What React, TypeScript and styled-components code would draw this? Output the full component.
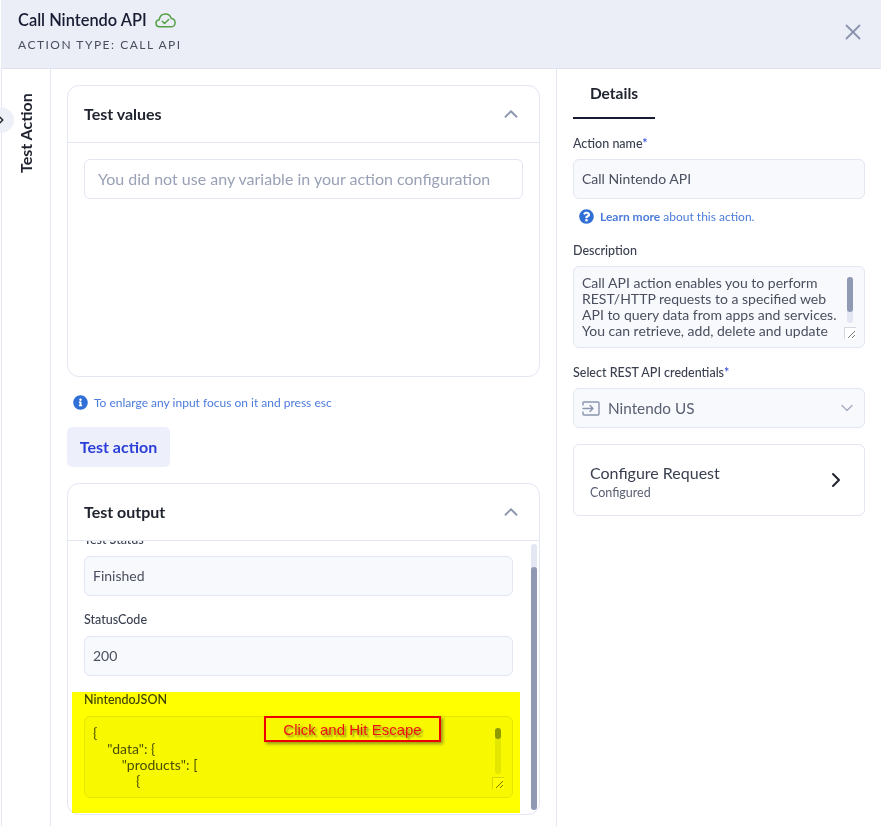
import React from "react";
import styled, { createGlobalStyle } from "styled-components";
import { ChevronDown, ChevronRight, ChevronUp, X } from "lucide-react";
import { FaInfoCircle, FaQuestionCircle } from "react-icons/fa";

const Global = createGlobalStyle`
  html, body { margin: 0; padding: 0; background: #fff; }
  * { box-sizing: border-box; }
  body { font-family: "Lato", "Noto Sans", sans-serif; color: #20242f; }
`;

const Page = styled.div`
  position: relative;
  width: 881px;
  height: 826px;
  overflow: hidden;
  display: flex;
  flex-direction: column;
  padding-left: 1px;
  background: #fff;
`;

const Header = styled.header`
  height: 69px;
  flex: none;
  background: #ebeef7;
  border-bottom: 1px solid #dfe3f0;
  padding: 10px 15px 0 17px;
  display: flex;
  justify-content: space-between;
  align-items: flex-start;
`;

const TitleBlock = styled.div`
  display: flex;
  flex-direction: column;
  gap: 7px;
`;

const TitleRow = styled.div`
  display: flex;
  align-items: center;
  gap: 8px;
  height: 20px;
`;

const Title = styled.h1`
  margin: 0;
  font-size: 16.4px;
  line-height: 20px;
  font-weight: 600;
  color: #171c33;
`;

const Subtitle = styled.div`
  font-size: 12px;
  line-height: 16px;
  letter-spacing: 1.5px;
  color: #4a4f5f;
`;

const CloseButton = styled.button`
  border: 0;
  background: none;
  padding: 0;
  margin-top: 9px;
  display: flex;
  color: #8b95ad;
`;

const Body = styled.div`
  flex: 1;
  display: flex;
  min-height: 0;
  border-left: 1px solid #e3e6f3;
`;

const Rail = styled.aside`
  width: 49px;
  flex: none;
  border-right: 1px solid #e3e6f3;
  display: flex;
  justify-content: center;
  padding-top: 24px;
  padding-right: 1px;
`;

const RailLabel = styled.div`
  writing-mode: vertical-rl;
  transform: rotate(180deg);
  height: 80px;
  font-size: 16px;
  font-weight: 700;
  line-height: 20px;
  text-align: left;
  color: #20242f;
`;

const RailToggle = styled.div`
  position: absolute;
  left: -13px;
  top: 107px;
  width: 27px;
  height: 26px;
  border-radius: 50%;
  background: #eef0f8;
  display: flex;
  align-items: center;
  justify-content: flex-end;
  padding-right: 6px;
  color: #20242f;
`;

const Main = styled.main`
  width: 506px;
  flex: none;
  border-right: 1px solid #e3e6f3;
  padding: 16px 16px 0 16px;
  display: flex;
  flex-direction: column;
`;

const Card = styled.section<{ $height: number }>`
  height: ${(p) => p.$height}px;
  flex: none;
  border: 1px solid #e3e6f3;
  border-radius: 12px;
  display: flex;
  flex-direction: column;
  overflow: hidden;
  background: #fff;
`;

const CardHeader = styled.div`
  height: 57px;
  flex: none;
  border-bottom: 1px solid #e3e6f3;
  padding: 0 17px 0 16px;
  display: flex;
  align-items: center;
  justify-content: space-between;
  color: #8b95ad;
`;

const CardTitle = styled.h2`
  margin: 0;
  font-size: 16px;
  font-weight: 700;
  line-height: 20px;
  color: #20242f;
`;

const CardBody = styled.div`
  padding: 16px;
`;

const Field = styled.div<{ $height?: number }>`
  height: ${(p) => p.$height ?? 40}px;
  border: 1px solid #e3e6f3;
  border-radius: 6px;
  background: #f8f9fd;
  padding: 0 8px 2px;
  display: flex;
  align-items: center;
  font-size: 14px;
  color: #4a4f5f;
`;

const WhiteField = styled(Field)`
  background: #fff;
`;

const Placeholder = styled.span`
  font-size: 16px;
  padding-left: 5px;
  color: #98a1b5;
`;

const InfoRow = styled.div`
  margin: 16px 0 0 6px;
  height: 18px;
  display: flex;
  align-items: center;
  gap: 6px;
  font-size: 12px;
  color: #4c7bd9;
`;

const BlueIcon = styled.span`
  display: flex;
  color: #2f6fd6;
`;

const PrimaryButton = styled.button`
  margin-top: 16px;
  align-self: flex-start;
  width: 103px;
  height: 40px;
  border: 0;
  border-radius: 5px;
  background: #edeffb;
  padding: 0 0 2px;
  font-family: inherit;
  font-size: 16px;
  font-weight: 700;
  color: #2b3fd6;
`;

const OutputCard = styled(Card)`
  margin-top: 16px;
  position: relative;
`;

const Scroller = styled.div`
  position: relative;
  flex: 1;
  min-height: 0;
  overflow: hidden;
  padding: 0 26px 0 16px;
`;

const ClippedLabel = styled.div`
  margin-top: -9px;
`;

const FieldLabel = styled.div<{ $gap?: number }>`
  font-size: 12.5px;
  line-height: 16px;
  margin-top: ${(p) => p.$gap ?? 0}px;
  margin-bottom: 8px;
  color: #3b4050;
  font-weight: 500;
`;

const CodeBox = styled.div`
  position: relative;
  height: 82px;
  border: 1px solid #e3e6f3;
  border-radius: 6px;
  background: #f8f9fd;
  padding: 8px;
  overflow: hidden;
`;

const Code = styled.pre`
  margin: 0;
  font-family: "Lato", sans-serif;
  font-size: 14px;
  line-height: 16px;
  color: #4a4f5f;
`;

const Track = styled.div<{ $top: number; $height: number; $right: number; $width: number }>`
  position: absolute;
  top: ${(p) => p.$top}px;
  right: ${(p) => p.$right}px;
  width: ${(p) => p.$width}px;
  height: ${(p) => p.$height}px;
  border-radius: 3px;
  background: #e3e6f3;
`;

const Thumb = styled.div<{ $top: number; $height: number }>`
  position: absolute;
  left: 0;
  right: 0;
  top: ${(p) => p.$top}px;
  height: ${(p) => p.$height}px;
  border-radius: 3px;
  background: #8f99b3;
`;

const Grip = styled.div`
  position: absolute;
  right: 8px;
  bottom: 8px;
  width: 12px;
  height: 12px;
  background: #fff;
  border: 1px solid #d4d7de;
  border-right: 0;
  border-bottom: 0;
  color: #555;
  display: flex;
`;

const Side = styled.aside`
  flex: 1;
  min-width: 0;
  padding: 0 16px;
`;

const Tab = styled.div`
  width: 82px;
  height: 50px;
  border-bottom: 2px solid #171c33;
  display: flex;
  align-items: center;
  justify-content: center;
  font-size: 15.5px;
  font-weight: 700;
  color: #20242f;
`;

const SideLabel = styled.div<{ $gap: number }>`
  margin-top: ${(p) => p.$gap}px;
  margin-bottom: 8px;
  height: 16px;
  font-size: 12.5px;
  line-height: 18px;
  font-weight: 500;
  color: #3b4050;
`;

const Req = styled.span`
  color: #2b3fd6;
`;

const LearnRow = styled.div`
  margin: 8px 0 0 6px;
  height: 18px;
  display: flex;
  align-items: center;
  gap: 6px;
  font-size: 12px;
  color: #4c7bd9;
`;

const Strong = styled.b`
  font-weight: 700;
`;

const DescBox = styled.div`
  position: relative;
  height: 82px;
  border: 1px solid #e3e6f3;
  border-radius: 6px;
  background: #f8f9fd;
  padding: 8px 8px 0 8px;
  overflow: hidden;
`;

const DescText = styled.div`
  font-size: 14px;
  line-height: 16px;
  color: #4a4f5f;
  white-space: nowrap;
`;

const SelectBox = styled(Field)`
  justify-content: space-between;
  padding: 0 7px 0 8px;
  color: #a5adc2;
`;

const SelectValue = styled.div`
  display: flex;
  align-items: center;
  gap: 8px;
  font-size: 15.3px;
  color: #5a6072;
`;

const ConfigCard = styled.div`
  margin-top: 16px;
  height: 72px;
  border: 1px solid #e3e6f3;
  border-radius: 6px;
  padding: 0 16px;
  display: flex;
  align-items: center;
  justify-content: space-between;
  color: #20242f;
`;

const ConfigText = styled.div`
  padding-top: 4px;
`;

const ConfigTitle = styled.div`
  font-size: 16px;
  line-height: 20px;
  color: #3b4050;
`;

const ConfigSub = styled.div`
  margin-top: 2px;
  font-size: 12.5px;
  line-height: 16px;
  color: #5a6072;
`;

const Highlight = styled.div`
  position: absolute;
  left: 72px;
  top: 692px;
  width: 448px;
  height: 121px;
  background: #ffff00;
  mix-blend-mode: multiply;
  pointer-events: none;
`;

const Callout = styled.div`
  position: absolute;
  left: 264px;
  top: 716px;
  width: 177px;
  height: 26px;
  border: 2px solid #ee0000;
  box-shadow: 2px 2px 3px rgba(90, 90, 40, 0.6);
  padding-top: 1px;
  display: flex;
  align-items: center;
  justify-content: center;
  font-family: "Liberation Sans", Arial, sans-serif;
  font-size: 15px;
  color: #f01010;
  text-shadow: 2px 2px 2px rgba(90, 90, 40, 0.65);
`;

const Cloud = () => (
  <svg width="21" height="15" viewBox="0 0 21 15" fill="none" stroke="#54a045" strokeWidth="1.5" strokeLinecap="round" strokeLinejoin="round">
    <path d="M5 13.8H4.6C2.5 13.8 1 12.2 1 10.3c0-1.9 1.4-3.3 3.2-3.5C4.8 3.3 7.4 1 10.4 1c2.9 0 5.2 2 5.9 4.6 2.2.2 3.8 2 3.8 4.1 0 2.3-1.8 4.1-4.1 4.1H5z" />
    <path d="M7.2 8.2l2.3 2.3 4.2-4" />
  </svg>
);

const CredentialIcon = () => (
  <svg width="18" height="15" viewBox="0 0 18 15" fill="none" stroke="#8b95ad" strokeWidth="1.4" strokeLinecap="round" strokeLinejoin="round">
    <path d="M1 4V2a1 1 0 0 1 1-1h14a1 1 0 0 1 1 1v11a1 1 0 0 1-1 1H2a1 1 0 0 1-1-1v-2" />
    <path d="M1 7.5h10M8 4.5l3 3-3 3" />
  </svg>
);

const GripLines = () => (
  <svg width="11" height="11" viewBox="0 0 11 11" stroke="#555" strokeWidth="0.8">
    <path d="M3 10l7-7M7 10l3-3" />
  </svg>
);

export default function App() {
  return (
    <Page>
      <Global />
      <Header>
        <TitleBlock>
          <TitleRow>
            <Title>Call Nintendo API</Title>
            <Cloud />
          </TitleRow>
          <Subtitle>ACTION TYPE: CALL API</Subtitle>
        </TitleBlock>
        <CloseButton>
          <X size={26} strokeWidth={1.7} />
        </CloseButton>
      </Header>
      <Body>
        <Rail>
          <RailLabel>Test Action</RailLabel>
        </Rail>
        <Main>
          <Card $height={292}>
            <CardHeader>
              <CardTitle>Test values</CardTitle>
              <ChevronUp size={22} strokeWidth={2} />
            </CardHeader>
            <CardBody>
              <WhiteField>
                <Placeholder>You did not use any variable in your action configuration</Placeholder>
              </WhiteField>
            </CardBody>
          </Card>
          <InfoRow>
            <BlueIcon>
              <FaInfoCircle size={15} />
            </BlueIcon>
            To enlarge any input focus on it and press esc
          </InfoRow>
          <PrimaryButton>Test action</PrimaryButton>
          <OutputCard $height={332}>
            <CardHeader>
              <CardTitle>Test output</CardTitle>
              <ChevronUp size={22} strokeWidth={2} />
            </CardHeader>
            <Scroller>
              <ClippedLabel>
                <FieldLabel>Test Status</FieldLabel>
              </ClippedLabel>
              <Field>Finished</Field>
              <FieldLabel $gap={16}>StatusCode</FieldLabel>
              <Field>200</Field>
              <FieldLabel $gap={16}>NintendoJSON</FieldLabel>
              <CodeBox>
                <Code>{`{\n    "data": {\n        "products": [\n            {`}</Code>
                <Track $top={11} $height={46} $right={11} $width={6}>
                  <Thumb $top={0} $height={11} />
                </Track>
                <Grip>
                  <GripLines />
                </Grip>
              </CodeBox>
              <Track $top={3} $height={266} $right={2} $width={6}>
                <Thumb $top={23} $height={243} />
              </Track>
            </Scroller>
          </OutputCard>
        </Main>
        <Side>
          <Tab>Details</Tab>
          <SideLabel $gap={16}>
            Action name<Req>*</Req>
          </SideLabel>
          <Field>Call Nintendo API</Field>
          <LearnRow>
            <BlueIcon>
              <FaQuestionCircle size={15} />
            </BlueIcon>
            <span>
              <Strong>Learn more</Strong> about this action.
            </span>
          </LearnRow>
          <SideLabel $gap={17}>Description</SideLabel>
          <DescBox>
            <DescText>
              Call API action enables you to perform
              <br />
              REST/HTTP requests to a specified web
              <br />
              API to query data from apps and services.
              <br />
              You can retrieve, add, delete and update
            </DescText>
            <Track $top={10} $height={46} $right={11} $width={6}>
              <Thumb $top={0} $height={35} />
            </Track>
            <Grip>
              <GripLines />
            </Grip>
          </DescBox>
          <SideLabel $gap={16}>
            Select REST API credentials<Req>*</Req>
          </SideLabel>
          <SelectBox>
            <SelectValue>
              <CredentialIcon />
              Nintendo US
            </SelectValue>
            <ChevronDown size={20} strokeWidth={1.6} />
          </SelectBox>
          <ConfigCard>
            <ConfigText>
              <ConfigTitle>Configure Request</ConfigTitle>
              <ConfigSub>Configured</ConfigSub>
            </ConfigText>
            <ChevronRight size={24} strokeWidth={2} />
          </ConfigCard>
        </Side>
      </Body>
      <RailToggle>
        <ChevronRight size={14} strokeWidth={2.6} />
      </RailToggle>
      <Highlight />
      <Callout>Click and Hit Escape</Callout>
    </Page>
  );
}
